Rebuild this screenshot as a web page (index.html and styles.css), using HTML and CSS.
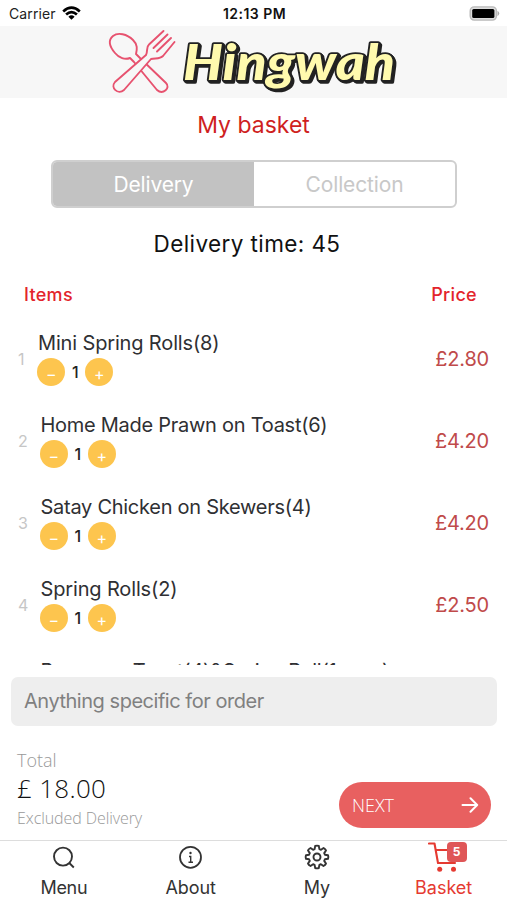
FILE: index.html
```html
<!DOCTYPE html>
<html lang="en">
<head>
<meta charset="utf-8">
<meta name="viewport" content="width=device-width, initial-scale=1">
<title>My basket</title>
<link rel="stylesheet" href="styles.css">
</head>
<body>
<div class="app">
  <div class="status">
    <div class="carrier"><span class="carrier-name">Carrier</span>
      <svg width="19" height="15" viewBox="0 0 19 15" fill="none" stroke="#000" stroke-width="2.7"><path d="M1.2 5.4Q9.5-2 17.8 5.4"/><path d="M4.1 8.5Q9.5 3.6 14.9 8.5"/><path d="M6.4 10.7Q9.5 8 12.6 10.7L9.5 13.8Z" fill="#000" stroke="none"/></svg>
    </div>
    <span class="clock">12:13 PM</span>
    <svg class="battery" width="31" height="15" viewBox="0 0 31 15"><rect x="1.2" y=".9" width="26.2" height="13.2" rx="4" fill="#ddd" stroke="#b9b9b9" stroke-width="1.4"/><rect x="3.2" y="3" width="22.2" height="9" rx="1.5" fill="#000"/><path d="M28.5 4.8Q32 7.5 28.5 10.2Z" fill="#aaa"/></svg>
  </div>

  <header class="brand">
    <svg width="310" height="72" viewBox="100 26 310 72">
      <g fill="#f7f7f7" stroke="#e7526f" stroke-width="1.9" stroke-linejoin="round" stroke-linecap="round">
        <path d="M113 36C118 32 127 34 133 40C138 45 137 49 136 54L141 59L166 83C171 88 163 95 157 90L134 62L130 58C125 60 119 58 115 53C109 46 108 40 113 36Z"/>
        <path d="M163.5 31L149 44.5C146 47 148 51 146 55L115 82C110 88 118 95 124 90L151 59C156 58 160 59 163 56L174.5 42"/>
        <path d="M167.5 34.5L153.5 48M171 38L157 51.5" fill="none"/>
      </g>
      <text class="wordmark" x="183" y="79.5" textLength="212" lengthAdjust="spacingAndGlyphs">Hingwah</text>
    </svg>
  </header>

  <h1 class="title">My basket</h1>

  <div class="segment">
    <div class="option selected"><span>Delivery</span></div>
    <div class="option"><span>Collection</span></div>
  </div>

  <p class="eta">Delivery time: 45</p>

  <div class="columns"><span>Items</span><span>Price</span></div>

  <div class="list">
    <div class="row first">
      <span class="index">1</span>
      <div class="item"><span class="name">Mini Spring Rolls(8)</span>
        <div class="stepper"><i class="btn">−</i><b>1</b><i class="btn">+</i></div></div>
      <span class="price">£2.80</span>
    </div>
    <div class="row">
      <span class="index">2</span>
      <div class="item"><span class="name long">Home Made Prawn on Toast(6)</span>
        <div class="stepper"><i class="btn">−</i><b>1</b><i class="btn">+</i></div></div>
      <span class="price">£4.20</span>
    </div>
    <div class="row">
      <span class="index">3</span>
      <div class="item"><span class="name long">Satay Chicken on Skewers(4)</span>
        <div class="stepper"><i class="btn">−</i><b>1</b><i class="btn">+</i></div></div>
      <span class="price">£4.20</span>
    </div>
    <div class="row">
      <span class="index">4</span>
      <div class="item"><span class="name">Spring Rolls(2)</span>
        <div class="stepper"><i class="btn">−</i><b>1</b><i class="btn">+</i></div></div>
      <span class="price">£2.50</span>
    </div>
    <div class="row">
      <span class="index"></span>
      <div class="item"><span class="name long">Prawn on Toast(4)&amp;Spring Roll(1 area)</span></div>
    </div>
  </div>

  <div class="note">Anything specific for order</div>

  <div class="summary">
    <div class="totals">
      <span class="label">Total</span>
      <span class="amount">£ 18.00</span>
      <span class="hint">Excluded Delivery</span>
    </div>
    <div class="next"><span>NEXT</span>
      <svg width="18" height="16" viewBox="0 0 18 16" fill="none" stroke="#fff" stroke-width="2" stroke-linecap="round" stroke-linejoin="round"><path d="M1.5 8H16M9.5 1.3L16.2 8L9.5 14.7"/></svg>
    </div>
  </div>

  <nav class="tabs">
    <div class="tab">
      <svg width="32" height="32" viewBox="0 0 32 32" fill="none" stroke="#333" stroke-width="1.9"><circle cx="16" cy="15.6" r="9"/><path d="M22.3 22L26.8 26.5"/></svg>
      <span class="t-menu">Menu</span>
    </div>
    <div class="tab">
      <svg width="32" height="32" viewBox="0 0 32 32" fill="none" stroke="#333" stroke-width="1.8"><circle cx="16.5" cy="16.3" r="10.5"/><path d="M15 15.5h1.7v5.5M14.5 21.2h4.5" stroke-width="1.4"/><circle cx="16.5" cy="12" r="1.2" fill="#333" stroke="none"/></svg>
      <span class="t-about">About</span>
    </div>
    <div class="tab">
      <svg width="32" height="32" viewBox="0 0 32 32" fill="none" stroke="#333" stroke-width="1.9" stroke-linejoin="round"><circle cx="16" cy="16" r="3.5"/><path d="M14.2 5Q16 4.3 17.8 5L18.4 8.1L20 8.8L22.6 7Q24.3 7.900 25 9.500L23.2 12.1L23.900 13.700L27 14.200Q27.700 16 27 17.800L23.900 18.300L23.200 19.900L25 22.500Q24.200 24.200 22.500 25L19.900 23.200L18.400 23.900L17.800 27Q16 27.700 14.200 27L13.600 23.900L12.100 23.200L9.500 25Q7.800 24.200 7 22.500L8.800 19.900L8.100 18.300L5 17.800Q4.300 16 5 14.200L8.100 13.700L8.800 12.100L7 9.500Q7.800 7.800 9.500 7L12.100 8.800L13.600 8.100Z"/></svg>
      <span class="t-my">My</span>
    </div>
    <div class="tab active">
      <div class="cart">
        <svg width="32" height="32" viewBox="0 0 32 32" fill="none" stroke="#e53a31" stroke-width="2.1" stroke-linecap="round" stroke-linejoin="round"><path d="M1 2.5H6.5L10 22H27M7.5 9H30L27 20"/><circle cx="11.7" cy="28.3" r="2.5" fill="#e53a31" stroke="none"/><circle cx="25.5" cy="28.3" r="2.5" fill="#e53a31" stroke="none"/></svg>
        <em class="badge">5</em>
      </div>
      <span class="t-basket">Basket</span>
    </div>
  </nav>
</div>
</body>
</html>
```

FILE: styles.css
```css
* { box-sizing: border-box; margin: 0; padding: 0; }
body { background: #fff; font-family: Inter, "Liberation Sans", sans-serif; }
svg { display: block; flex: none; }
span, b, i, em { white-space: nowrap; font-style: normal; }
.app { width: 507px; height: 900px; overflow: hidden; display: flex; flex-direction: column; background: #fff; }
.app > * { flex: none; }

.status { height: 26px; display: grid; grid-template-columns: 1fr auto 1fr; align-items: center; padding: 1px 7px 0 9px; }
.carrier { display: flex; align-items: center; gap: 6px; }
.carrier-name { font-size: 14px; color: #222; letter-spacing: 0.1px; }
.clock { font-size: 14px; font-weight: 600; color: #111; letter-spacing: 0.45px; }
.battery { justify-self: end; }

.brand { height: 72px; background: #f7f7f7; display: flex; padding-left: 100px; }
.wordmark { font-family: Lato, sans-serif; font-weight: 900; font-style: italic; font-size: 50px; fill: #fffaae; stroke: #222; stroke-width: 3.5px; stroke-linejoin: round; paint-order: stroke; filter: drop-shadow(1px 1px 0 #222) drop-shadow(1px 1.5px 0 #222); }

.title { height: 62px; line-height: 54px; text-align: center; font-size: 23px; font-weight: 400; color: #cf1f1f; letter-spacing: 0; }

.segment { width: 406px; height: 48px; margin-left: 51px; border: 2px solid #cfcfcf; border-radius: 6px; display: flex; overflow: hidden; }
.option { flex: 1; display: flex; align-items: center; justify-content: center; font-size: 21px; color: #c8c8c8; letter-spacing: -0.15px; }
.selected { background: #c2c2c2; color: #fff; }

.eta { height: 36px; margin-top: 18px; line-height: 36px; padding-right: 13px; text-align: center; font-size: 22.5px; color: #111; letter-spacing: 0.4px; }
.columns { height: 50px; line-height: 50px; display: flex; justify-content: space-between; padding: 0 30px 0 24px; font-size: 18px; font-weight: 500; color: #e3242b; letter-spacing: 0.3px; margin-top: 8px; }

.list { height: 345px; overflow: hidden; }
.row { height: 82px; display: flex; align-items: center; padding-right: 18px; }
.index { width: 40.5px; padding: 0 0 5px 18px; font-size: 16px; color: #c6c6c6; }
.first .index { width: 38px; }
.item { flex: 1; height: 82px; padding-top: 9px; }
.name { display: block; height: 29px; line-height: 28px; font-size: 20px; color: #2f3033; letter-spacing: -0.15px; }
.long { letter-spacing: -0.27px; }
.stepper { display: flex; align-items: center; height: 28px; margin-left: -0.6px; }
.btn { width: 28px; height: 28px; border-radius: 50%; background: #fdc54e; color: #fff; font-size: 16px; line-height: 32px; text-align: center; }
.stepper b { width: 20px; text-align: center; font-size: 16px; font-weight: 500; color: #222; }
.price { font-size: 20px; color: #c04a4a; letter-spacing: -0.2px; padding-bottom: 5px; }

.note { height: 49px; margin: 12px 10px 0 11px; border-radius: 7px; background: #eee; padding-left: 13px; line-height: 49px; font-size: 20px; color: #808080; letter-spacing: -0.47px; }

.summary { height: 115px; display: flex; justify-content: space-between; padding: 0 16px 0 17px; border-bottom: 1px solid #ddd; font-family: "Open Sans", sans-serif; font-weight: 300; }
.totals { display: flex; flex-direction: column; padding-top: 21px; }
.label { font-size: 18px; line-height: 26px; color: #999; }
.amount { font-size: 26px; line-height: 31px; color: #111; letter-spacing: 0.3px; }
.hint { font-size: 16px; line-height: 28px; color: #999; letter-spacing: -0.08px; }
.next { width: 152px; height: 46px; margin-top: 56px; border-radius: 23px; background: #e86060; color: #fff; display: flex; align-items: center; justify-content: space-between; padding: 0 12px 0 13px; font-size: 18px; }

.tabs { height: 59px; display: grid; grid-template-columns: repeat(4, 1fr); }
.tab { display: flex; flex-direction: column; align-items: center; color: #333; font-size: 18px; }
.tab > span { line-height: 30px; }
.t-menu { letter-spacing: -0.3px; padding-left: 1px; }
.t-about { letter-spacing: -0.1px; padding-left: 1px; }
.active { color: #e53a31; }
.cart { position: relative; width: 32px; height: 32px; }
.badge { position: absolute; left: 19px; top: 1px; width: 20px; height: 20px; border-radius: 4px; background: #df5657; color: #fff; font-size: 12px; font-weight: 700; line-height: 20px; text-align: center; }
```
